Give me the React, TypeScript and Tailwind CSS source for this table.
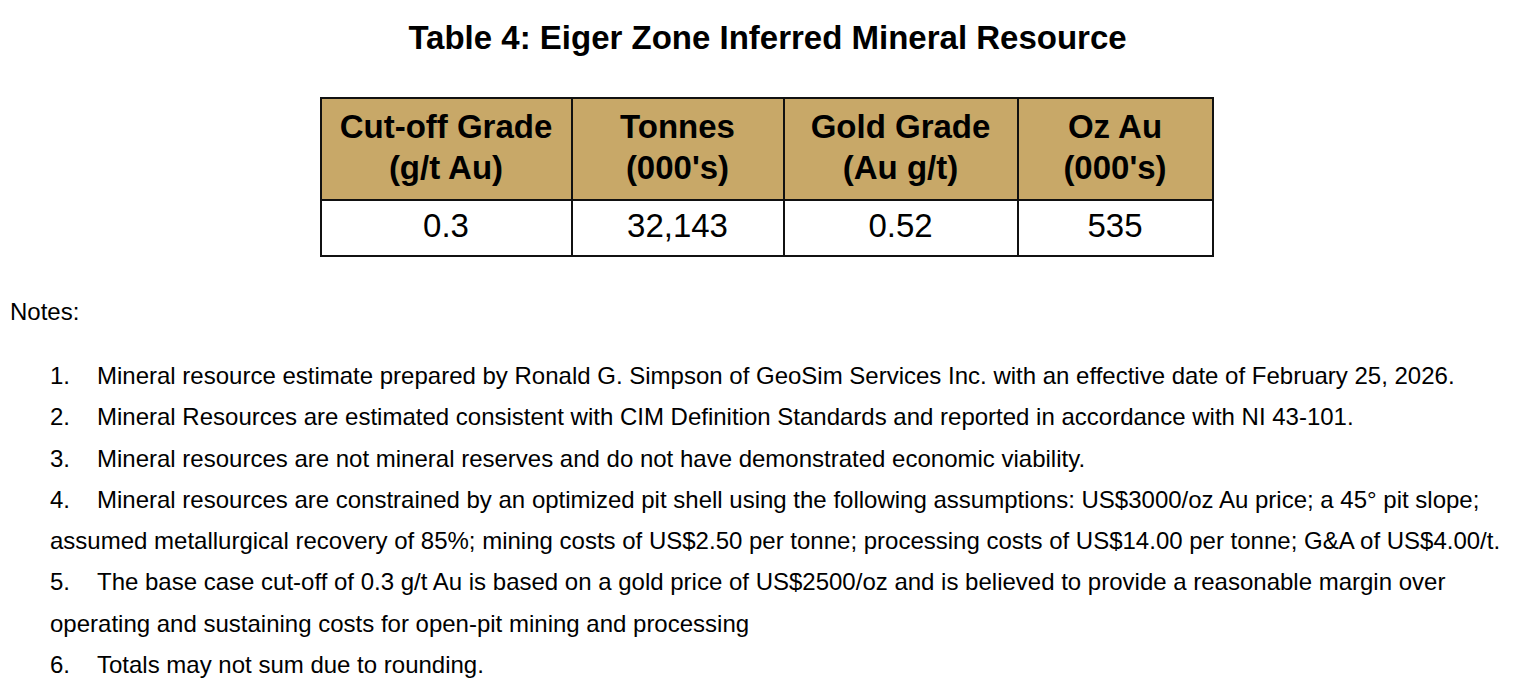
const HEAD = [
  ["Cut-off Grade", "(g/t Au)"],
  ["Tonnes", "(000's)"],
  ["Gold Grade", "(Au g/t)"],
  ["Oz Au", "(000's)"],
];
const ROW = ["0.3", "32,143", "0.52", "535"];
const COLS = ["w-[251px]", "w-[212px]", "w-[234px]", "w-[195px]"];

const NOTES = [
  "Mineral resource estimate prepared by Ronald G. Simpson of GeoSim Services Inc. with an effective date of February 25, 2026.",
  "Mineral Resources are estimated consistent with CIM Definition Standards and reported in accordance with NI 43-101.",
  "Mineral resources are not mineral reserves and do not have demonstrated economic viability.",
  "Mineral resources are constrained by an optimized pit shell using the following assumptions: US$3000/oz Au price; a 45° pit slope; assumed metallurgical recovery of 85%; mining costs of US$2.50 per tonne; processing costs of US$14.00 per tonne; G&A of US$4.00/t.",
  "The base case cut-off of 0.3 g/t Au is based on a gold price of US$2500/oz and is believed to provide a reasonable margin over operating and sustaining costs for open-pit mining and processing",
  "Totals may not sum due to rounding.",
];

export default function App() {
  return (
    <div className="w-[1523px] h-[686px] overflow-hidden bg-white text-black font-['Liberation_Sans',Arial,sans-serif]">
      <h1 className="pt-[19px] pl-[12px] text-center text-[33px] leading-[38px] font-bold">
        Table 4: Eiger Zone Inferred Mineral Resource
      </h1>

      <div className="mt-[40px] flex justify-center pl-[10px]">
        <table className="border-collapse border-2 border-[#111]">
          <thead>
            <tr className="bg-[#c8a868]">
              {HEAD.map((h, i) => (
                <th key={i} className={`${COLS[i]} h-[102px] pb-[4px] border-2 border-[#111] text-[33px] leading-[41px] font-bold`}>
                  {h[0]}
                  <br />
                  {h[1]}
                </th>
              ))}
            </tr>
          </thead>
          <tbody>
            <tr>
              {ROW.map((v, i) => (
                <td key={i} className="h-[56px] pb-[5px] border-2 border-[#111] text-center text-[33px] leading-[38px]">
                  {v}
                </td>
              ))}
            </tr>
          </tbody>
        </table>
      </div>

      <p className="mt-[40px] pl-[10px] text-[24px] leading-[30px]">Notes:</p>

      <ol className="mt-[28px] pl-[50px] pr-[8px] text-[24px] leading-[41.3px]">
        {NOTES.map((n, i) => (
          <li key={i}>
            <span className="inline-block w-[47px]">{i + 1}.</span>
            {n}
          </li>
        ))}
      </ol>
    </div>
  );
}
